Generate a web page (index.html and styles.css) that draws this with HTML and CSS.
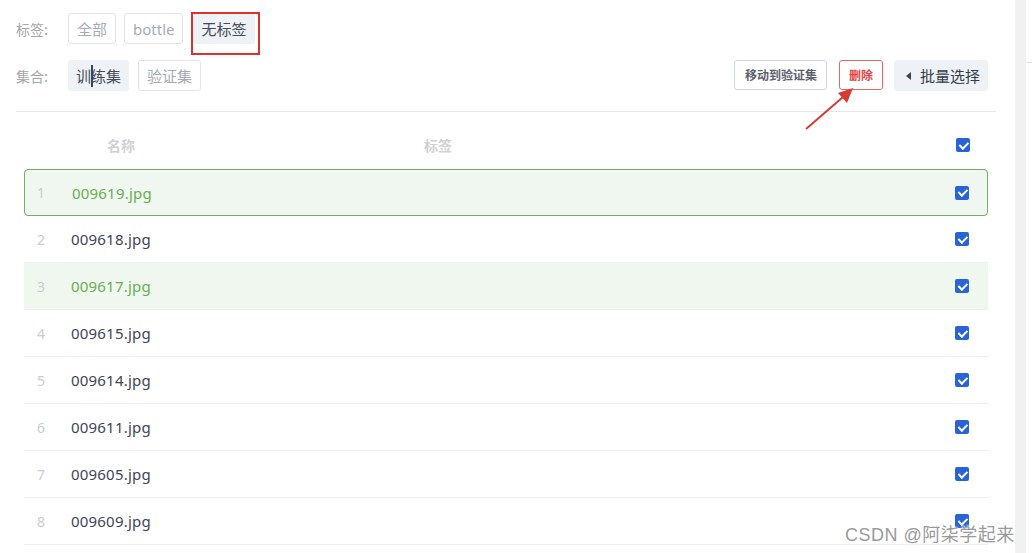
FILE: index.html
```html
<!DOCTYPE html>
<html lang="zh">
<head>
<meta charset="utf-8">
<link rel="stylesheet" href="styles.css">
</head>
<body>
<div class="page">
  <div class="main">
    <div class="filter">
      <span class="flabel">标签:</span>
      <span class="tag">全部</span>
      <span class="tag">bottle</span>
      <span class="tag active">无标签</span>
    </div>
    <div class="filter second">
      <span class="flabel">集合:</span>
      <span class="tag active">训<span class="caret"></span>练集</span>
      <span class="tag">验证集</span>
      <div class="actions">
        <button class="btn">移动到验证集</button>
        <button class="btn danger">删除</button>
        <button class="btn batch"><span class="tri"></span>批量选择</button>
      </div>
    </div>
    <div class="divider"></div>
    <div class="table">
      <div class="thead">
        <span class="th-name">名称</span>
        <span class="th-tag">标签</span>
        <span class="cb"></span>
      </div>
      <div class="row current"><span class="idx">1</span><span class="name">009619.jpg</span><span class="cb"></span></div>
      <div class="row"><span class="idx">2</span><span class="name">009618.jpg</span><span class="cb"></span></div>
      <div class="row hl"><span class="idx">3</span><span class="name">009617.jpg</span><span class="cb"></span></div>
      <div class="row"><span class="idx">4</span><span class="name">009615.jpg</span><span class="cb"></span></div>
      <div class="row"><span class="idx">5</span><span class="name">009614.jpg</span><span class="cb"></span></div>
      <div class="row"><span class="idx">6</span><span class="name">009611.jpg</span><span class="cb"></span></div>
      <div class="row"><span class="idx">7</span><span class="name">009605.jpg</span><span class="cb"></span></div>
      <div class="row"><span class="idx">8</span><span class="name">009609.jpg</span><span class="cb"></span></div>
    </div>
  </div>
  <div class="scrollbar"></div>
  <div class="edge"><div class="edge-line"></div></div>
</div>
<div class="redbox"></div>
<svg class="arrow" width="1032" height="553" viewBox="0 0 1032 553">
  <line x1="806" y1="129" x2="843" y2="97" stroke="#d83a34" stroke-width="2"/>
  <polygon points="853,88 838,93 847,103" fill="#d83a34"/>
</svg>
<div class="watermark">CSDN @阿柒学起来</div>
</body>
</html>
```
FILE: styles.css
```css
* { box-sizing: border-box; }
html, body { margin: 0; padding: 0; background: #fff; }
body {
  font-family: "Noto Sans", "Noto Sans CJK SC", sans-serif;
  width: 1032px;
  height: 553px;
  overflow: hidden;
  position: relative;
}
.page { display: flex; height: 553px; }
.main { width: 1015px; padding: 13px 19px 0 16px; }
.scrollbar { width: 11px; background: #f0f1f0; }
.edge { width: 6px; padding-top: 62px; }
.edge-line { height: 1px; background: #e2e2e2; }

.filter { display: flex; align-items: center; height: 31px; }
.filter.second { margin-top: 16px; }
.flabel {
  width: 52px;
  font-size: 14px;
  color: #a2a6ad;
  font-family: "Noto Sans CJK SC", sans-serif;
}
.tag {
  height: 31px;
  padding: 0 8px;
  margin-right: 8px;
  border: 1px solid #dfe3ea;
  border-radius: 3px;
  display: inline-flex;
  align-items: center;
  font-size: 15px;
  color: #a3abbb;
  font-family: "Noto Sans", "Noto Sans CJK SC", sans-serif;
}
.tag.active { background: #eef2f6; border-color: #eef2f6; color: #434a5a; margin-right: 9px; padding: 0 7px; }
.filter:first-child .tag:nth-child(3) { margin-right: 10px; }
.caret { display: inline-block; width: 2px; height: 22px; background: #3a4256; margin-right: -2px; }

.actions { margin-left: auto; margin-right: 8px; display: flex; align-items: center; }
.btn {
  font-family: "Noto Sans CJK SC", sans-serif;
  font-size: 12px;
  font-weight: bold;
  color: #5a606c;
  background: #fff;
  border: 1px solid #cfd5dd;
  border-radius: 3px;
  height: 30px;
  padding: 0 9px 0 10px;
  margin-left: 12px;
  margin-top: -2px;
}
.btn.danger { color: #e04646; border-color: #e26a66; padding: 0 9px; }
.btn.batch {
  background: #eef2f6;
  border-color: #eef2f6;
  color: #363c48;
  font-weight: normal;
  font-size: 15px;
  height: 31px;
  margin-left: 11px;
  margin-top: 0;
  padding: 0 7px 0 11px;
  display: inline-flex;
  align-items: center;
}
.tri {
  width: 0; height: 0;
  border-top: 4px solid transparent;
  border-bottom: 4px solid transparent;
  border-right: 5px solid #3a4256;
  margin-right: 9px;
}

.divider { height: 1px; background: #e4e6e8; margin-top: 20px; }

.table { padding: 10px 8px 0 8px; }
.thead {
  height: 46px;
  display: flex;
  align-items: center;
  font-family: "Noto Sans CJK SC", sans-serif;
  font-size: 14px;
  font-weight: bold;
  color: #cfd1d4;
  margin-bottom: 1px;
}
.th-name { margin-left: 83px; width: 317px; }
.th-tag { flex: 1; }
.thead .cb { margin-right: 18px; }

.row {
  height: 47px;
  display: flex;
  align-items: center;
  border-bottom: 1px solid #eef0f1;
  font-size: 15px;
  color: #3d4556;
}
.row.current {
  border: 1px solid #74ad63;
  border-radius: 4px;
  background: #f0f7f0;
  color: #6aae52;
}
.row.current .idx { padding-left: 12px; }
.row.current .cb { margin-right: 18px; }
.row.hl { background: #eff7ef; color: #6aae52; }
.idx { width: 47px; padding-left: 13px; color: #c9ccd0; font-size: 14px; }
.name { flex: 1; letter-spacing: 0.2px; }
.cb {
  width: 14px; height: 14px;
  border-radius: 2px;
  background: #2864d8;
  margin-right: 19px;
  position: relative;
  flex: none;
}
.cb::after {
  content: "";
  position: absolute;
  left: 4.5px; top: 1.5px;
  width: 3.5px; height: 7px;
  border: solid #fff;
  border-width: 0 2px 2px 0;
  transform: rotate(45deg);
}

.redbox {
  position: absolute;
  left: 191px; top: 12px;
  width: 69px; height: 43px;
  border: 2px solid #d8342f;
}
.arrow { position: absolute; left: 0; top: 0; pointer-events: none; }
.watermark {
  position: absolute;
  left: 845px; top: 520px;
  font-family: "Liberation Sans", "Noto Sans CJK SC", sans-serif;
  font-size: 18px;
  letter-spacing: 0.5px;
  color: #9a9a9a;
  text-shadow: 0 0 2px #fff, 0 0 2px #fff;
  white-space: nowrap;
}
```
